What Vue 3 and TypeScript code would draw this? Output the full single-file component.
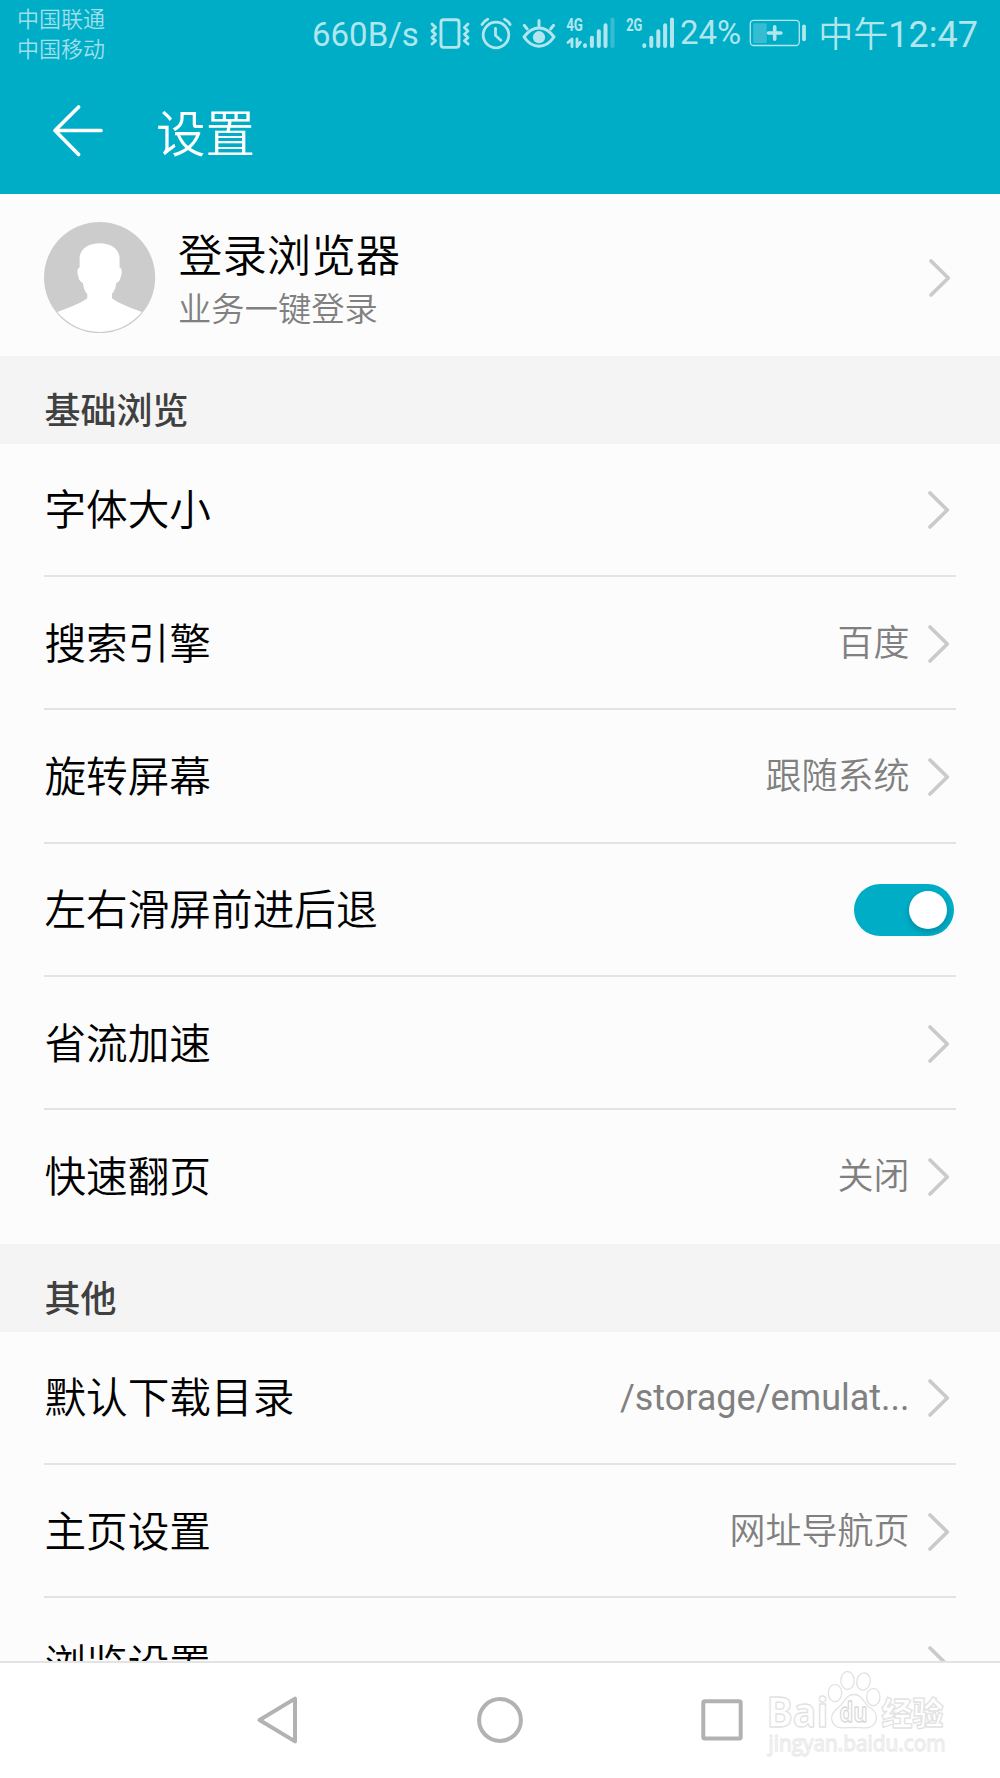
<script setup lang="ts">
import { ref } from 'vue'

interface Setting {
  label: string
  value?: string
  latin?: boolean
  toggle?: boolean
}

interface Section {
  title: string
  items: Setting[]
}

const swipeNavigation = ref(true)

const sections: Section[] = [
  {
    title: '基础浏览',
    items: [
      { label: '字体大小' },
      { label: '搜索引擎', value: '百度' },
      { label: '旋转屏幕', value: '跟随系统' },
      { label: '左右滑屏前进后退', toggle: true },
      { label: '省流加速' },
      { label: '快速翻页', value: '关闭' },
    ],
  },
  {
    title: '其他',
    items: [
      { label: '默认下载目录', value: '/storage/emulat...', latin: true },
      { label: '主页设置', value: '网址导航页' },
      { label: '浏览设置' },
    ],
  },
]
</script>

<template>
  <div class="screen">
    <header class="top">
      <div class="status">
        <div class="carriers">
          <span>中国联通</span>
          <span>中国移动</span>
        </div>
        <div class="indicators">
          <span class="speed">660B/s</span>
          <!-- vibrate -->
          <svg width="48" height="70" viewBox="0 0 48 70" fill="none" stroke="currentColor" stroke-width="2.9" stroke-linecap="round" stroke-linejoin="round">
            <rect x="15" y="19.8" width="18" height="27.6" rx="2.6" />
            <path stroke-width="2.8" d="M6 24l3.6 3.6L6 31l3.6 3.3L6 37.6l3.6 3.2L6 44M42 24l-3.6 3.6L42 31l-3.6 3.3L42 37.6l-3.6 3.2L42 44" />
          </svg>
          <!-- alarm -->
          <svg width="44" height="70" viewBox="0 0 44 70" fill="none" stroke="currentColor" stroke-width="2.8" stroke-linecap="round" stroke-linejoin="round">
            <circle cx="22" cy="35" r="12.8" />
            <path d="M21.5 28.5v7l5.3 4.8M8 24.5q2-3.5 5.7-5.3M30.5 19.2q3.5 1.8 5.6 5.3" />
          </svg>
          <!-- eye -->
          <svg width="44" height="70" viewBox="0 0 44 70" fill="none" stroke="currentColor" stroke-width="3" stroke-linecap="round" stroke-linejoin="round">
            <path d="M6 37Q12.5 28 21 28T36 37Q29.5 46.3 21 46.3T6 37Z" />
            <path d="M21 20.5v6M6.2 25.3l3 3.7M35.6 25.3l-3 3.7" />
            <circle cx="21" cy="37.2" r="6.1" fill="currentColor" stroke="none" />
          </svg>
          <!-- primary SIM -->
          <svg width="58" height="70" viewBox="0 0 58 70" fill="none" stroke="currentColor" stroke-width="4" stroke-linecap="round">
            <text class="net" x="4.2" y="31.3" textLength="16.8" lengthAdjust="spacingAndGlyphs">4G</text>
            <path stroke-width="2.8" stroke-linejoin="round" d="M6 42.500l4-3.500v7.700M15 39v7.700l3.400-4.500" />
            <path d="M23 45.200v.8M29.900 37.700V46M36.800 31.300V46M43.500 25.200V46" />
            <path opacity=".3" d="M50.500 19.600V46" />
          </svg>
          <!-- secondary SIM -->
          <svg width="58" height="70" viewBox="0 0 58 70" fill="none" stroke="currentColor" stroke-width="4" stroke-linecap="round">
            <text class="net" x="6.2" y="31.3" textLength="16.2" lengthAdjust="spacingAndGlyphs">2G</text>
            <path d="M24.300 45.200v.8M31.300 37.700V46M38.300 31.300V46M45.100 25.200V46M52 19.600V46" />
          </svg>
          <span class="percent">24%</span>
          <!-- battery -->
          <svg class="battery" width="66" height="70" viewBox="0 0 66 70" fill="none" stroke="currentColor">
            <rect x="6.3" y="20.3" width="49" height="25.2" rx="3.5" stroke-width="1.3" />
            <rect x="9.3" y="23.3" width="13.4" height="19.7" rx="1" fill="currentColor" stroke="none" opacity=".3" />
            <path d="M30.700 26.800v12.400M24.500 33h12.400" stroke-width="3.6" stroke-linecap="round" />
            <path d="M60 26.300v13" stroke-width="3.8" stroke-linecap="round" />
          </svg>
          <span class="clock"><span class="noon">中午</span>12:47</span>
        </div>
      </div>
      <div class="titlebar">
        <svg width="56" height="56" viewBox="0 0 56 56" fill="none" stroke="#fff" stroke-width="3.7" stroke-linecap="round" stroke-linejoin="round">
          <path d="M51 28.500H5M28.600 5L5 28.500l23.600 24" />
        </svg>
        <h1>设置</h1>
      </div>
    </header>

    <main class="content">
      <section class="profile">
        <svg class="avatar" viewBox="0 0 334 334">
          <circle cx="167" cy="167" r="167" fill="#cccccc" />
          <path fill="#fff" d="M167 64C132 64 108 82 107 108L107 137C99 140 99 152 103 164C106 176 110 182 117 183C119 200 123 208 130 216L130 229C108 245 70 260 40 270A164 164 0 0 0 294 270C264 260 226 245 204 229L204 216C211 208 215 200 217 183C224 182 228 176 231 164C235 152 235 140 227 137L227 108C226 82 202 64 167 64Z" />
        </svg>
        <div class="who">
          <strong>登录浏览器</strong>
          <span>业务一键登录</span>
        </div>
        <svg class="chevron" viewBox="0 0 24 40"><path d="M3 3l17.300 17L3 37" /></svg>
      </section>

      <section v-for="section in sections" :key="section.title">
        <h2>{{ section.title }}</h2>
        <ul>
          <li v-for="item in section.items" :key="item.label">
            <span class="label">{{ item.label }}</span>
            <button
              v-if="item.toggle"
              class="switch"
              :class="{ on: swipeNavigation }"
              @click="swipeNavigation = !swipeNavigation"
            >
              <i />
            </button>
            <template v-else>
              <span v-if="item.value" class="value" :class="{ latin: item.latin }">{{ item.value }}</span>
              <svg class="chevron" viewBox="0 0 24 40"><path d="M3 3l17.300 17L3 37" /></svg>
            </template>
          </li>
        </ul>
      </section>
    </main>

    <nav class="navbar">
      <svg width="56" height="56" viewBox="0 0 56 56"><path d="M9.500 28L45 6.600v42.800z" /></svg>
      <svg width="56" height="56" viewBox="0 0 56 56"><circle cx="28" cy="28" r="20.9" /></svg>
      <svg width="56" height="56" viewBox="0 0 56 56"><rect x="9.3" y="9.2" width="37.4" height="37.4" rx="1.5" /></svg>
      <svg class="brand" width="200" height="100" viewBox="0 0 200 100">
        <text class="b-main" x="6.5" y="66.5" textLength="62" lengthAdjust="spacingAndGlyphs">Bai</text>
        <ellipse cx="75" cy="33" rx="6.7" ry="8.7" />
        <ellipse cx="87.5" cy="20.5" rx="6.7" ry="9" />
        <ellipse cx="103.5" cy="21.5" rx="6.7" ry="8.7" transform="rotate(12 103.5 21.5)" />
        <ellipse cx="113.3" cy="37" rx="6.7" ry="8.7" />
        <path d="M94 34.500C86 34.500 84 43 79 47C72 52 70 58 73 63C77 70 86 67.500 94 67.500S111 70 115 63C118 57 116 51 109 47C103 42 102 34.500 94 34.500Z" />
        <text class="b-du" x="79.5" y="61.5" textLength="28" lengthAdjust="spacingAndGlyphs">du</text>
        <text class="b-cn" x="121.5" y="64.5" textLength="62" lengthAdjust="spacingAndGlyphs">经验</text>
        <text class="b-url" x="8.5" y="91" textLength="177" lengthAdjust="spacingAndGlyphs">jingyan.baidu.com</text>
      </svg>
    </nav>
  </div>
</template>

<style>
body {
  margin: 0;
}
</style>

<style scoped>
.screen {
  width: 1000px;
  height: 1778px;
  display: flex;
  flex-direction: column;
  overflow: hidden;
  background: #fcfcfc;
  color: #000;
  font-family: Roboto, 'Noto Sans CJK SC', sans-serif;
}

/* top area */
.top {
  flex: none;
  height: 194.400px;
  background: #00adc7;
}
.status {
  height: 70px;
  display: flex;
  justify-content: space-between;
  color: #b2e6ee;
}
.carriers {
  display: flex;
  flex-direction: column;
  padding: 5px 0 0 17px;
  font-size: 22px;
  line-height: 30.400px;
  font-weight: 350;
  color: #9fdfe9;
}
.indicators {
  display: flex;
  padding-right: 22px;
  line-height: 70px;
  white-space: nowrap;
}
.indicators svg {
  flex: none;
}
.speed {
  width: 114px;
  font-size: 33px;
}
.percent {
  width: 64px;
  margin-left: 2px;
  font-size: 33px;
  line-height: 65px;
}
.battery {
  margin-right: 8px;
}
.clock {
  width: 160px;
  display: flex;
  justify-content: flex-end;
  font-size: 36px;
}
.noon {
  font-size: 35px;
  font-weight: 350;
  line-height: 72px;
}
.net {
  font: 700 18px Roboto, sans-serif;
  fill: currentColor;
  stroke: none;
}
.titlebar {
  display: flex;
  align-items: center;
  height: 120px;
  padding-left: 50px;
}
h1 {
  margin: 9px 0 0 50px;
  font-size: 49.500px;
  font-weight: 350;
  line-height: 70px;
  color: #fff;
}

/* scrolling list */
.content {
  flex: 1;
  min-height: 0;
  overflow: hidden;
}
.profile {
  display: flex;
  align-items: center;
  height: 161.200px;
  padding: 0 48px 0 44.400px;
  box-sizing: border-box;
}
.avatar {
  width: 111.200px;
  height: 111.200px;
  margin-top: 5.500px;
}
.who {
  flex: 1;
  display: flex;
  flex-direction: column;
  padding: 16px 0 0 22.500px;
}
.who strong {
  font-size: 44.400px;
  font-weight: 350;
  line-height: 54px;
}
.who span {
  font-size: 33.300px;
  font-weight: 350;
  line-height: 51px;
  color: #808080;
}
.chevron {
  flex: none;
  width: 24px;
  height: 40px;
  margin-left: 17px;
  fill: none;
  stroke: #cacaca;
  stroke-width: 3.700px;
  stroke-linecap: round;
  stroke-linejoin: round;
}
.profile .chevron {
  margin-top: 6px;
}
h2 {
  margin: 0;
  height: 88px;
  padding: 22px 0 0 44.400px;
  box-sizing: border-box;
  background: #f4f4f4;
  color: #404040;
  font-size: 36px;
  font-weight: 500;
  line-height: 68px;
}
ul {
  margin: 0;
  padding: 0 44.400px;
  list-style: none;
}
li {
  display: flex;
  align-items: center;
  height: 133.330px;
  padding: 2px 5px 0 0;
  box-sizing: border-box;
  border-bottom: 2px solid #e3e3e3;
}
li:last-child {
  border-bottom-color: transparent;
}
.label {
  flex: 1;
  padding-top: 2.500px;
  font-size: 41.670px;
  font-weight: 350;
  line-height: 60px;
}
.value {
  padding-top: 1px;
  font-size: 36px;
  font-weight: 350;
  line-height: 60px;
  color: #808080;
}
.value.latin {
  padding-top: 0;
  font-weight: 400;
  line-height: 59px;
}
.switch {
  width: 99.500px;
  height: 52px;
  margin-right: -3px;
  padding: 7px;
  border: 0;
  border-radius: 26px;
  display: flex;
  align-items: center;
  background: #cacaca;
}
.switch.on {
  justify-content: flex-end;
  background: #00adc7;
}
.switch i {
  width: 38px;
  height: 38px;
  border-radius: 50%;
  background: #fff;
  box-shadow: 0 3px 7px rgba(0, 0, 0, 0.2);
}

/* system navigation */
.navbar {
  flex: none;
  position: relative;
  display: flex;
  align-items: center;
  gap: 166px;
  height: 117px;
  padding: 0 0 2px 250px;
  box-sizing: border-box;
  border-top: 2px solid #e3e3e3;
  background: #fff;
}
.navbar > svg {
  fill: none;
  stroke: #b2b2b2;
  stroke-width: 4px;
  stroke-linejoin: round;
}
.navbar > .brand {
  position: absolute;
  left: 760px;
  top: -3px;
  fill: #fff;
  stroke: #e2e2e2;
  stroke-width: 1.300px;
}
.b-main {
  font: 700 41px 'Open Sans', sans-serif;
}
.b-du {
  font: 700 26px 'Open Sans', sans-serif;
  stroke: #d8d8d8;
}
.b-cn {
  font: 900 32px 'Noto Sans CJK SC', sans-serif;
}
.b-url {
  font: 400 22px 'Open Sans', sans-serif;
  stroke: #ebebeb;
}
</style>
